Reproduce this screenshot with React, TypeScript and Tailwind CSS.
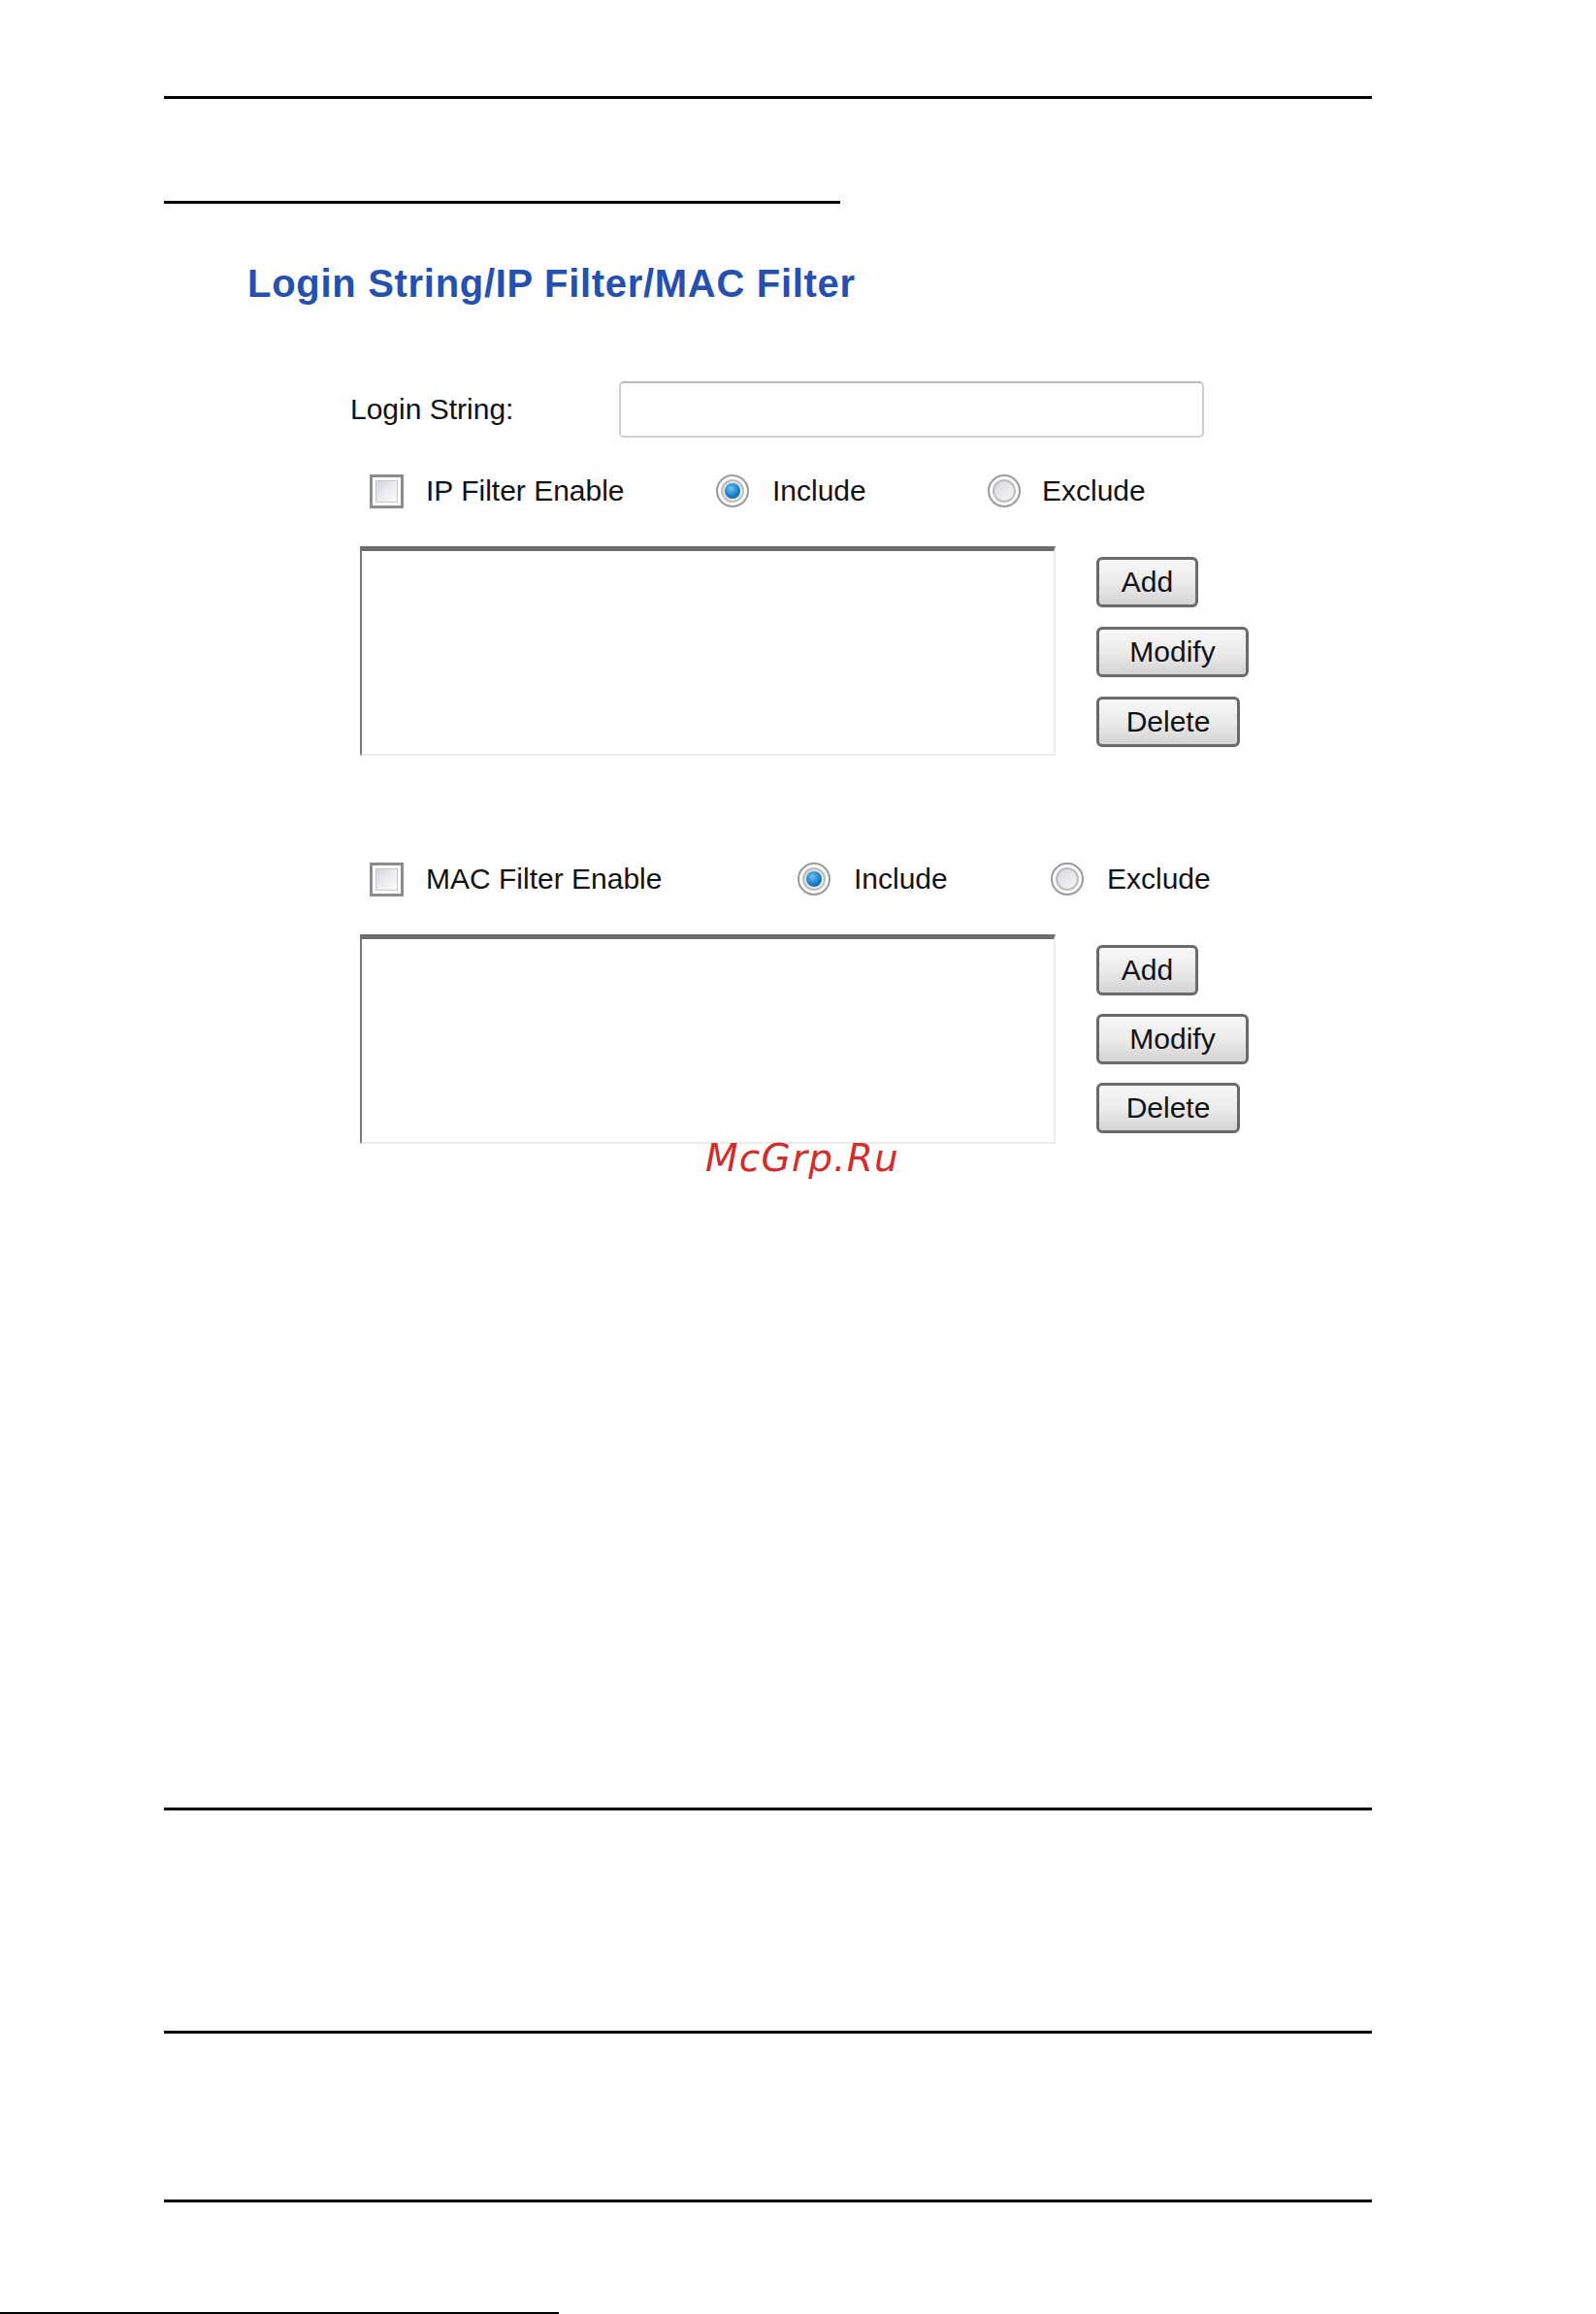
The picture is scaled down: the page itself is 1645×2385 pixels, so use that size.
import React from "react";

const Checkbox = () => (
  <div className="w-[35px] h-[35px] shrink-0 border-[3px] border-[#8c8c8c] bg-white p-[3px]">
    <div className="w-full h-full border border-[#c8c8c8] bg-gradient-to-br from-[#d2d5da] via-[#eaecef] to-[#fbfbfc]" />
  </div>
);

const Radio = ({ checked }: { checked?: boolean }) => (
  <div className="w-[34px] h-[34px] shrink-0 rounded-full border-2 border-[#9a9a9a] bg-white p-[3px]">
    <div className="w-full h-full rounded-full border-2 border-[#bcbcbc] bg-gradient-to-br from-[#d6d9dd] to-[#f7f7f8] flex items-center justify-center">
      {checked && (
        <div className="w-[16px] h-[16px] rounded-full bg-[radial-gradient(circle_at_40%_35%,#6fc4f0_0%,#1c7dc4_55%,#0b4a80_100%)]" />
      )}
    </div>
  </div>
);

const Btn = ({ label, w }: { label: string; w: string }) => (
  <div
    className={`${w} h-[52px] rounded-[6px] border-[3px] border-[#6a6a6a] bg-gradient-to-b from-[#f8f8f8] via-[#ebebeb] to-[#d4d4d4] flex items-center justify-center text-[30px] text-[#111] leading-none`}
  >
    {label}
  </div>
);

const ListBox = () => (
  <div className="w-[717px] h-[216px] bg-white border-t-[5px] border-t-[#6e6e6e] border-l-2 border-l-[#7a7a7a] border-r-2 border-r-[#ececec] border-b-2 border-b-[#ececec]" />
);

const Line = ({ w, mt }: { w: string; mt: string }) => (
  <div className={`${w} ${mt} h-[3px] bg-black`} />
);

export default function App() {
  return (
    <div
      className="relative w-[1645px] h-[2385px] bg-white overflow-hidden text-[#111]"
      style={{ fontFamily: '"Liberation Sans", Arial, sans-serif' }}
    >
      <div className="pt-[99px] pl-[169px] flex flex-col">
        <Line w="w-[1245px]" mt="mt-0" />
        <Line w="w-[697px]" mt="mt-[105px]" />

        <div className="mt-[58px] ml-[86px] h-[48px] leading-[48px] text-[40px] font-bold tracking-[0.7px] text-[#2550b0]">
          Login String/IP Filter/MAC Filter
        </div>

        {/* Login string row */}
        <div className="mt-[77px] ml-[192px] flex items-center h-[58px]">
          <div className="w-[277px] text-[30px] leading-none">Login String:</div>
          <div className="w-[603px] h-[58px] rounded-[5px] border-2 border-[#cfcfcf] border-t-[#b9b9b9] bg-white" />
        </div>

        {/* IP filter row */}
        <div className="mt-[37px] ml-[212px] flex items-center h-[36px] text-[30px] leading-none">
          <Checkbox />
          <div className="ml-[23px] w-[299px]">IP Filter Enable</div>
          <Radio checked />
          <div className="ml-[24px] w-[222px]">Include</div>
          <Radio />
          <div className="ml-[22px]">Exclude</div>
        </div>

        <div className="mt-[39px] ml-[202px] flex">
          <ListBox />
          <div className="ml-[42px] pt-[11px] flex flex-col gap-[20px]">
            <Btn label="Add" w="w-[105px]" />
            <Btn label="Modify" w="w-[157px]" />
            <Btn label="Delete" w="w-[148px]" />
          </div>
        </div>

        {/* MAC filter row */}
        <div className="mt-[109px] ml-[212px] flex items-center h-[36px] text-[30px] leading-none">
          <Checkbox />
          <div className="ml-[23px] w-[383px]">MAC Filter Enable</div>
          <Radio checked />
          <div className="ml-[24px] w-[203px]">Include</div>
          <Radio />
          <div className="ml-[24px]">Exclude</div>
        </div>

        <div className="mt-[39px] ml-[202px] flex">
          <ListBox />
          <div className="ml-[42px] pt-[11px] flex flex-col gap-[19px]">
            <Btn label="Add" w="w-[105px]" />
            <Btn label="Modify" w="w-[157px]" />
            <Btn label="Delete" w="w-[148px]" />
          </div>
        </div>

        <Line w="w-[1245px]" mt="mt-[684px]" />
        <Line w="w-[1245px]" mt="mt-[227px]" />
        <Line w="w-[1245px]" mt="mt-[171px]" />
      </div>

      {/* watermark overlay */}
      <div
        className="absolute left-[727px] top-[1170px] text-[39px] leading-[48px] italic tracking-[1.2px] text-[#d42b2b]"
        style={{ fontFamily: '"DejaVu Sans", sans-serif' }}
      >
        McGrp.Ru
      </div>

      {/* bottom partial rule */}
      <div className="absolute left-0 bottom-0 w-[576px] h-[2px] bg-black" />
    </div>
  );
}
